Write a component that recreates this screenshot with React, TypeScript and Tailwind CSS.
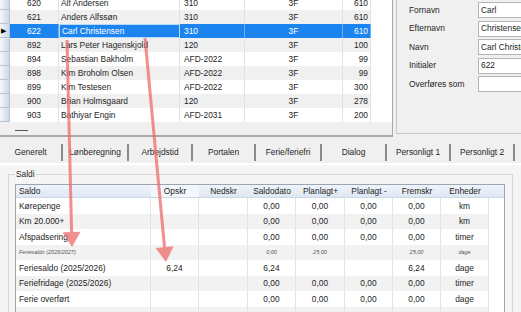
import React from "react";

const people = [
  ["620", "Alf Andersen", "310", "3F", "610"],
  ["621", "Anders Alfssøn", "310", "3F", "610"],
  ["622", "Carl Christensen", "310", "3F", "610"],
  ["892", "Lars Peter Hagenskjold", "120", "3F", "100"],
  ["894", "Sebastian Bakholm", "AFD-2022", "3F", "99"],
  ["898", "Kim Broholm Olsen", "AFD-2022", "3F", "99"],
  ["899", "Kim Testesen", "AFD-2022", "3F", "300"],
  ["900", "Brian Holmsgaard", "120", "3F", "278"],
  ["903", "Bathiyar Engin", "AFD-2031", "3F", "200"],
];

const fields = [
  ["Fornavn", "Carl"],
  ["Efternavn", "Christensen"],
  ["Navn", "Carl Christensen"],
  ["Initialer", "622"],
  ["Overføres som", ""],
];

const tabs: [string, number][] = [
  ["Generelt", 63],
  ["Lønberegning", 66],
  ["Arbejdstid", 64],
  ["Portalen", 63],
  ["Ferie/feriefri", 66],
  ["Dialog", 65],
  ["Personligt 1", 64],
  ["Personligt 2", 64],
];

const cols: [string, number][] = [
  ["Saldo", 135],
  ["Opskr", 48],
  ["Nedskr", 49],
  ["Saldodato", 48],
  ["Planlagt+", 49],
  ["Planlagt -", 48],
  ["Fremskr", 48],
  ["Enheder", 48],
];

// saldo rækker
const saldi: { cells: string[]; small?: boolean }[] = [
  { cells: ["Kørepenge", "", "", "0,00", "0,00", "0,00", "0,00", "km"] },
  { cells: ["Km 20.000+", "", "", "0,00", "0,00", "0,00", "0,00", "km"] },
  { cells: ["Afspadsering", "", "", "0,00", "0,00", "0,00", "0,00", "timer"] },
  { cells: ["Feriesaldo (2026/2027)", "", "", "0,00", "25,00", "", "25,00", "dage"], small: true },
  { cells: ["Feriesaldo (2025/2026)", "6,24", "", "6,24", "", "", "6,24", "dage"] },
  { cells: ["Feriefridage (2025/2026)", "", "", "0,00", "0,00", "0,00", "0,00", "timer"] },
  { cells: ["Ferie overført", "", "", "0,00", "0,00", "0,00", "0,00", "dage"] },
  { cells: ["", "", "", "", "", "", "", ""] },
];

function PersonGrid() {
  return (
    <div className="w-[393px] h-full bg-white border-r border-b-2 border-[#a9a9a9] flex flex-col overflow-hidden">
      <div className="-mt-[4px]">
        {people.map((p, i) => {
          const sel = i === 2;
          const stripe = i % 2 === 1 ? "bg-[#f0f0f0]" : "bg-white";
          return (
            <div key={p[0]} className="flex h-[14px]">
              <div className="w-[10px] shrink-0 flex items-center bg-gradient-to-r from-[#f5f7fb] to-[#cdd8e7] border-b border-r border-[#b8c4d4]">
                {sel && <span className="text-[7px] leading-none text-black ml-[1px]">▶</span>}
              </div>
              <div className={`flex flex-1 ${sel ? "bg-[#1b84ef] text-white" : stripe}`}>
                <div className={`w-[49px] flex items-center justify-center border-r ${sel ? "border-[#6fb0f5]" : "border-[#e2e2e2]"}`}>{p[0]}</div>
                <div className={`w-[121px] flex items-center pl-[2px] border-r ${sel ? "border border-[#b9d9fb]" : "border-[#e2e2e2]"}`}>{p[1]}</div>
                <div className={`w-[65px] flex items-center pl-[4px] border-r ${sel ? "border-[#6fb0f5]" : "border-[#e2e2e2]"}`}>{p[2]}</div>
                <div className={`w-[98px] flex items-center justify-center border-r ${sel ? "border-[#6fb0f5]" : "border-[#e2e2e2]"}`}>{p[3]}</div>
                <div className={`w-[28px] flex items-center justify-end pr-[2px] border-r ${sel ? "border-[#6fb0f5]" : "border-[#e2e2e2]"}`}>{p[4]}</div>
                <div className="flex-1 bg-white" />
              </div>
            </div>
          );
        })}
      </div>
      <div className="flex-1 bg-[#f0f0f0] flex items-end pb-[4px]">
        <div className="ml-[15px] w-[13px] h-px bg-[#555]" />
      </div>
    </div>
  );
}

function PersonFields() {
  return (
    <div className="flex-1 ml-[3px] h-[134px] border-l border-b border-[#c6c6c6] pl-[12px] pt-[2px] flex flex-col gap-[2.5px] overflow-hidden">
      {fields.map(([label, value]) => (
        <div key={label} className="flex h-[16px] items-center">
          <div className="w-[69px] shrink-0">{label}</div>
          <div className="w-[70px] shrink-0 h-full bg-white border border-[#b4b4b4] flex items-center pl-[2px] whitespace-nowrap overflow-hidden">
            {value}
          </div>
        </div>
      ))}
    </div>
  );
}

function Arrows() {
  return (
    <svg className="absolute inset-0 pointer-events-none" width="521" height="312">
      <g opacity="0.75">
        <line x1="67" y1="40" x2="71.6" y2="233" stroke="#ee6a6a" strokeWidth="3" />
        <polygon points="62.6,232.2 80.6,231.8 72,247" fill="#ee6a6a" />
        <line x1="145" y1="38" x2="164.6" y2="248" stroke="#ee6a6a" strokeWidth="3" />
        <polygon points="155.6,247.9 173.6,246.3 166,262" fill="#ee6a6a" />
      </g>
    </svg>
  );
}

export default function App() {
  return (
    <div className="w-[521px] h-[312px] overflow-hidden relative bg-[#f0f0f0] text-[#1e1e1e] text-[8.4px] leading-none font-['Liberation_Sans',Arial,sans-serif]">
      <div className="flex h-[137px]">
        <PersonGrid />
        <PersonFields />
      </div>

      {/* faneblade */}
      <div className="flex h-[26px] items-center pt-[4px]">
        {tabs.map(([t, w]) => (
          <div key={t} className="flex items-center h-[17px]" style={{ width: w }}>
            <div className="flex-1 text-center">{t}</div>
            <div className="w-[2px] h-full bg-[#8a8a8a]" />
          </div>
        ))}
      </div>

      <div className="h-[2px] bg-white" />
      <div className="bg-[#f5f5f5] h-full pt-[9px]">
        <div className="relative ml-[8px] mr-[8px] border-l border-t border-r border-[#d6d6d6] h-full pt-[9px] pl-[6px]">
          <div className="absolute -top-[5px] left-[6px] bg-[#f5f5f5] px-[1px]">Saldi</div>
          <div className="w-[490px] h-full bg-white border-l border-t border-r border-[#9aa6b6]">
            <div className="flex h-[13px] bg-gradient-to-b from-[#f0f4fa] to-[#dfe7f3] border-b border-[#cdd8e6]">
              {cols.map(([c, w], i) => (
                <div
                  key={c}
                  className={`flex items-center ${i === 0 ? "pl-[3px]" : "justify-center"} ${i === 1 ? "bg-[#f3f6fb]" : ""}`}
                  style={{ width: w }}
                >
                  {c}
                </div>
              ))}
            </div>
            {saldi.map((r, ri) => (
              <div key={ri} className={`flex h-[15.5px] w-[473px] ${ri % 2 === 1 ? "bg-[#f2f2f2]" : "bg-white"}`}>
                {r.cells.map((v, ci) => (
                  <div
                    key={ci}
                    className={`flex items-center border-r border-[#e4e4e4] ${ci === 0 ? "pl-[3px]" : "justify-center"} ${
                      r.small ? "italic text-[5.5px] text-[#555]" : ""
                    }`}
                    style={{ width: cols[ci][1] }}
                  >
                    {v}
                  </div>
                ))}
              </div>
            ))}
          </div>
        </div>
      </div>

      <Arrows />
    </div>
  );
}
